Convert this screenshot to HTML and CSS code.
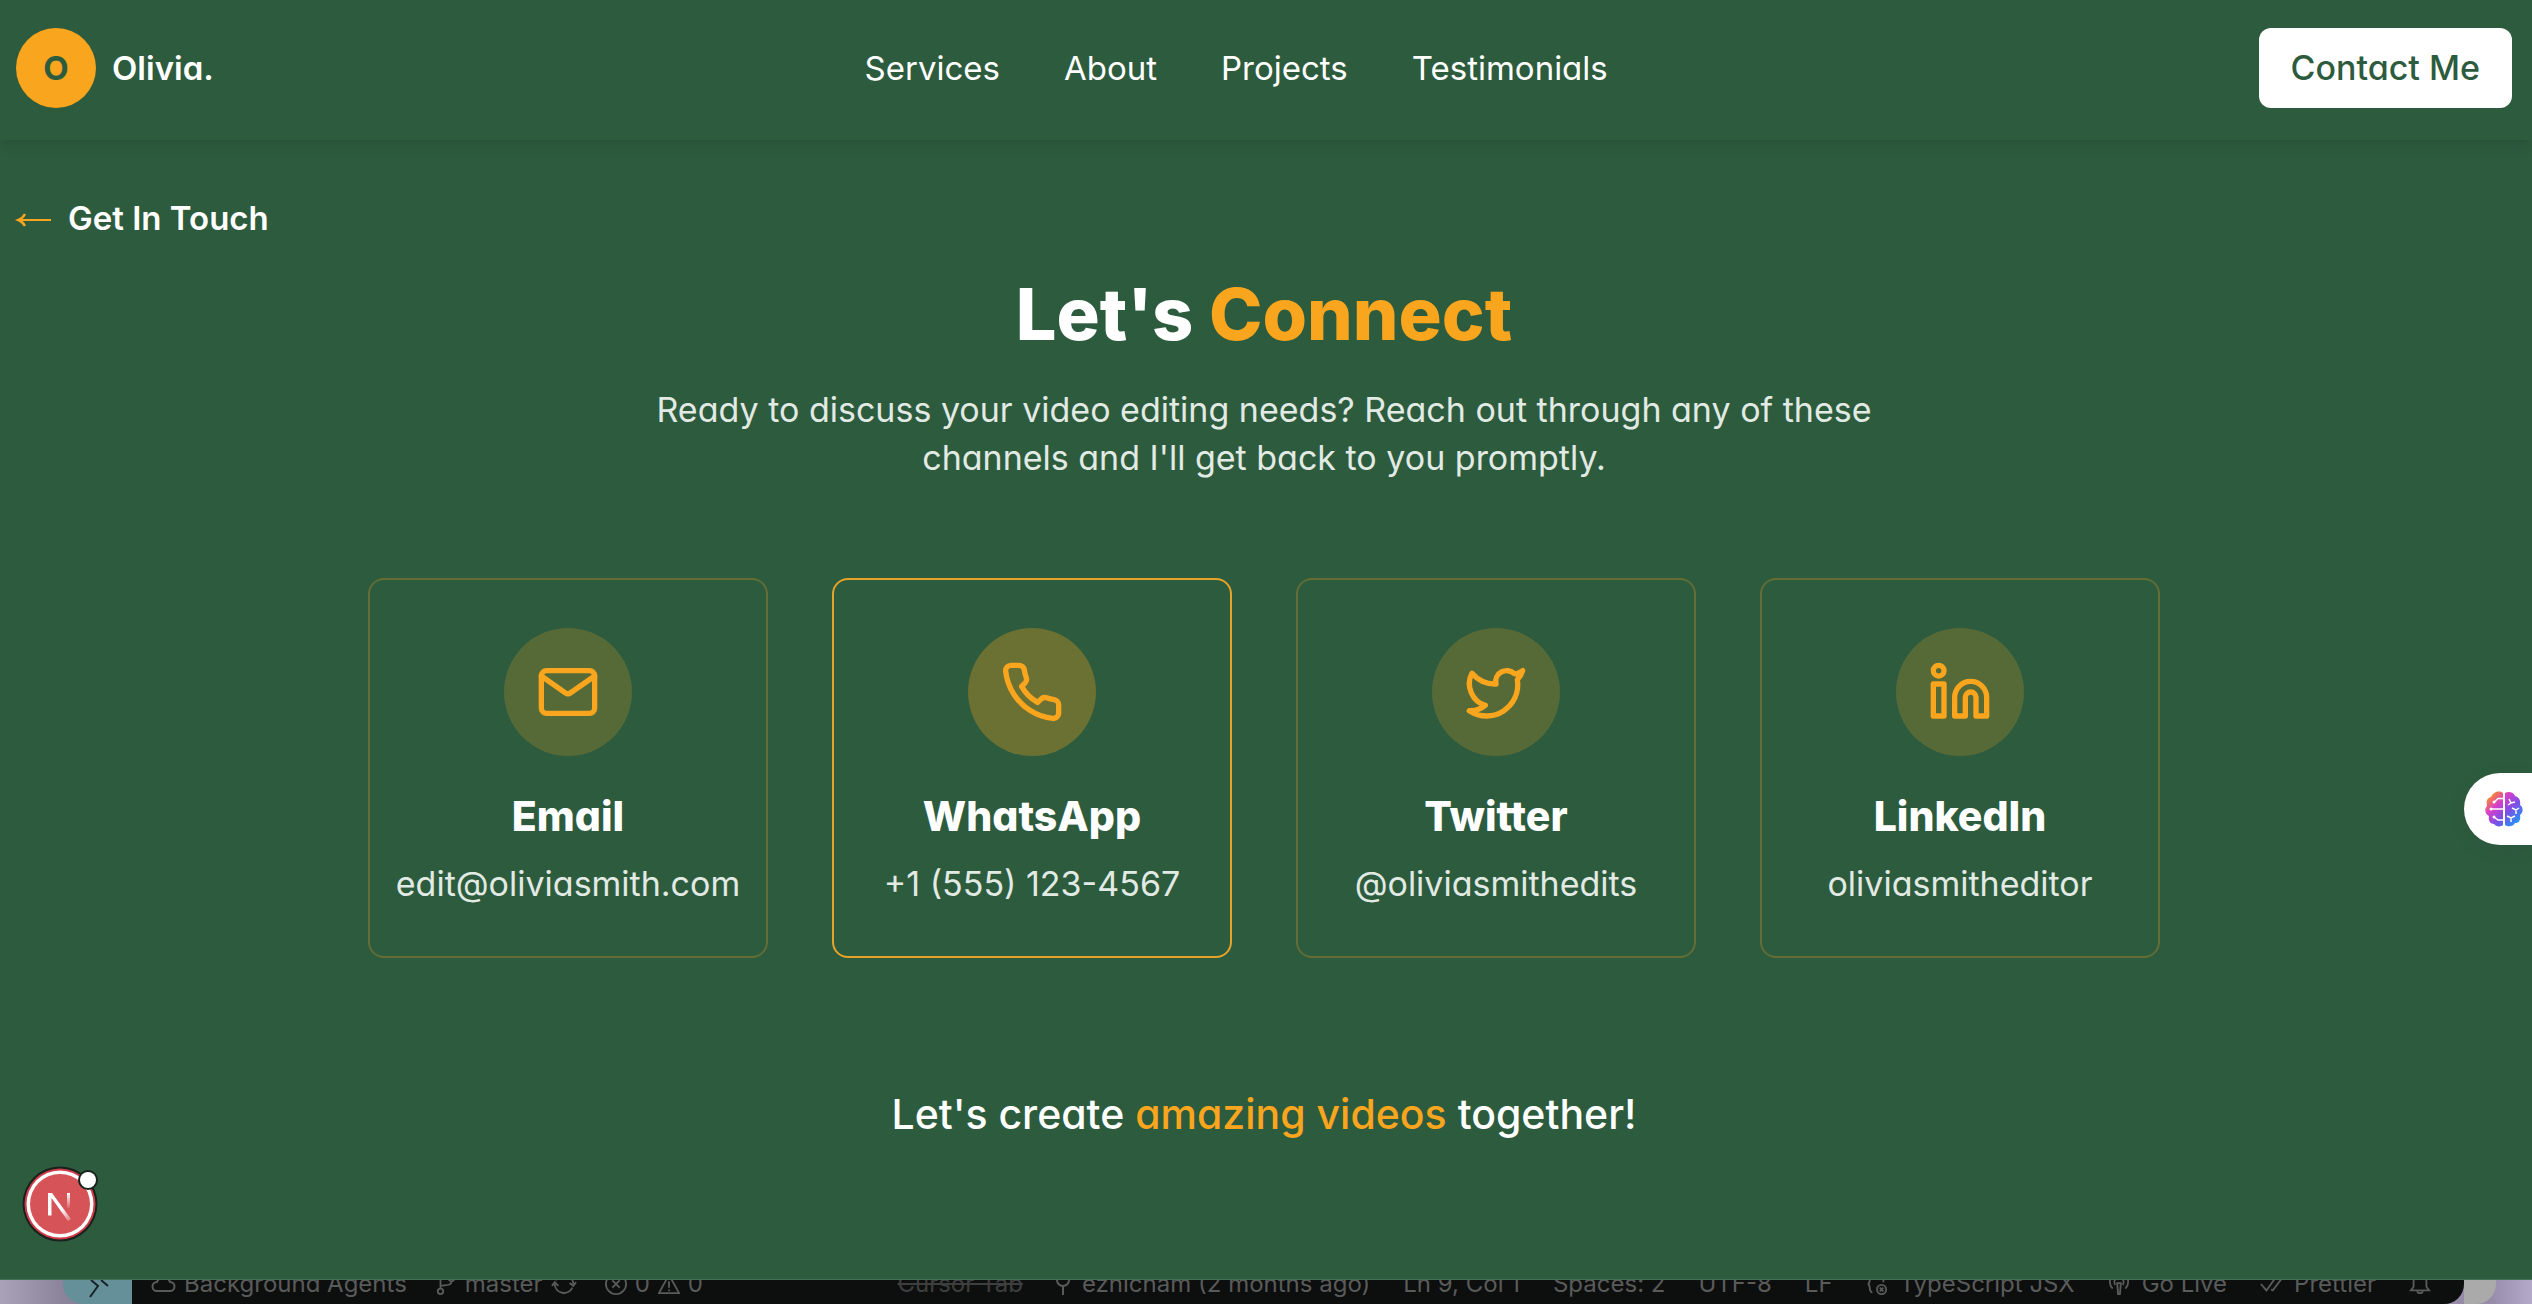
FILE: index.html
```html
<!DOCTYPE html>
<html lang="en">
<head>
  <meta charset="utf-8">
  <meta name="viewport" content="width=device-width, initial-scale=1">
  <title>Olivia. | Get In Touch</title>
  <link rel="stylesheet" href="styles.css">
</head>
<body>
  <div class="page">
    <header class="header">
      <a class="brand" href="#home"><span class="brand-mark">O</span><span class="brand-name">Olivia.</span></a>
      <nav class="nav" aria-label="Main">
        <a href="#services">Services</a>
        <a href="#about">About</a>
        <a href="#projects">Projects</a>
        <a href="#testimonials">Testimonials</a>
      </nav>
      <button class="contact-button" type="button">Contact Me</button>
    </header>

    <main class="main">
      <a class="back" href="#home">
        <svg class="back-arrow" viewBox="0 0 36 16" aria-hidden="true"><path d="M3 10H35" stroke-width="2"/><path d="M9 4Q6.500 8.500 2.500 10Q6.500 11.500 9 16" stroke-width="2.500"/></svg>
        <span>Get In Touch</span>
      </a>
      <h1 class="title">Let's <span class="accent">Connect</span></h1>
      <p class="intro">Ready to discuss your video editing needs? Reach out through any of these channels and I'll get back to you promptly.</p>

      <div class="cards">
        <a class="card" href="mailto:edit@oliviasmith.com">
          <span class="card-icon"><svg viewBox="0 0 24 24" aria-hidden="true"><path d="M4 4h16c1.100 0 2 .9 2 2v12c0 1.100-.9 2-2 2H4c-1.100 0-2-.9-2-2V6c0-1.100.9-2 2-2z"/><path d="M22 6l-9 6.300a1.700 1.700 0 0 1-2 0L2 6"/></svg></span>
          <h2 class="card-title">Email</h2>
          <p class="card-text">edit@oliviasmith.com</p>
        </a>
        <a class="card card-active" href="tel:+15551234567">
          <span class="card-icon"><svg viewBox="0 0 24 24" aria-hidden="true"><path d="M22 16.920v3a2 2 0 0 1-2.180 2 19.790 19.790 0 0 1-8.630-3.070 19.500 19.500 0 0 1-6-6 19.790 19.790 0 0 1-3.070-8.670A2 2 0 0 1 4.110 2h3a2 2 0 0 1 2 1.720 12.840 12.840 0 0 0 .7 2.810 2 2 0 0 1-.45 2.110L8.090 9.910a16 16 0 0 0 6 6l1.270-1.270a2 2 0 0 1 2.110-.45 12.840 12.840 0 0 0 2.810.7A2 2 0 0 1 22 16.920z"/></svg></span>
          <h2 class="card-title">WhatsApp</h2>
          <p class="card-text">+1 (555) 123-4567</p>
        </a>
        <a class="card" href="#twitter">
          <span class="card-icon"><svg viewBox="0 0 24 24" aria-hidden="true"><path d="M22 4s-.7 2.100-2 3.400c1.600 10-9.400 17.300-18 11.600 2.200.1 4.400-.6 6-2C3 15.500.5 9.600 3 5c2.200 2.600 5.600 4.100 9 4-.9-4.200 4-6.600 7-3.800 1.100 0 3-1.200 3-1.200z"/></svg></span>
          <h2 class="card-title">Twitter</h2>
          <p class="card-text">@oliviasmithedits</p>
        </a>
        <a class="card" href="#linkedin">
          <span class="card-icon"><svg viewBox="0 0 24 24" aria-hidden="true"><path d="M16 8a6 6 0 0 1 6 6v7h-4v-7a2 2 0 0 0-4 0v7h-4v-7a6 6 0 0 1 6-6z"/><rect x="2" y="9" width="4" height="12"/><circle cx="4" cy="4" r="2"/></svg></span>
          <h2 class="card-title">LinkedIn</h2>
          <p class="card-text">oliviasmitheditor</p>
        </a>
      </div>

      <p class="closing">Let's create <span class="accent">amazing videos</span> together!</p>
    </main>

    <button class="assistant" type="button" aria-label="Open assistant">
      <svg viewBox="0 0 38 36" aria-hidden="true">
        <defs>
          <linearGradient id="brain" x1="0" y1="0" x2="1" y2="1">
            <stop offset="0" stop-color="#ffae1a"/><stop offset=".15" stop-color="#f5813f"/><stop offset=".35" stop-color="#d63fcb"/><stop offset=".6" stop-color="#7a50e6"/><stop offset=".85" stop-color="#2f8df5"/><stop offset="1" stop-color="#25b5ff"/>
          </linearGradient>
        </defs>
        <path fill="url(#brain)" d="M18 2v32c-2 2-7 2-9-1-4 0-6-4-5-8-4-2-5-7-2-10-1-5 0-8 4-9 2-5 8-7 12-4zM20 2c3-2 9-1 10 3 4 1 6 5 5 9 4 3 3 8 0 10 1 5-1 8-5 8-2 4-7 4-10 2z"/>
        <path class="brain-lines" d="M18 7.500h-5l-3 3M18 18H7M18 29h-5l-4-3M24 8l2 4 4-1M26 12l-3 2M27 17l4 2 3-2M31 19v4M22 25l4 2 4-2M26 27v4"/>
        <circle cx="9" cy="11" r="1.500" fill="#fff"/><circle cx="6" cy="18" r="1.500" fill="#fff"/><circle cx="9" cy="26" r="1.500" fill="#fff"/>
      </svg>
    </button>

    <button class="dev-badge" type="button" aria-label="Open developer tools">
      <svg viewBox="0 0 76 76" aria-hidden="true">
        <defs>
          <linearGradient id="fade" x1="0" y1="0" x2="0" y2="1"><stop offset="0" stop-color="#fff"/><stop offset="1" stop-color="#fff" stop-opacity=".1"/></linearGradient>
          <linearGradient id="tail" x1="0" y1="0" x2="1" y2="1"><stop offset=".6" stop-color="#fff"/><stop offset="1" stop-color="#fff" stop-opacity=".2"/></linearGradient>
        </defs>
        <circle cx="38" cy="38" r="37.500" fill="#17221c"/>
        <circle cx="38" cy="38" r="35.500" fill="#ce3b49"/>
        <circle cx="38" cy="38" r="33.500" fill="#fff"/>
        <circle cx="38" cy="38" r="30" fill="#d65357"/>
        <path d="M26 27h4l19 26-3 2-16.500-23v17.500H26z" fill="url(#tail)"/>
        <rect x="45" y="27" width="3" height="15" fill="url(#fade)"/>
        <circle cx="66" cy="14" r="10" fill="#17221c"/><circle cx="66" cy="14" r="8" fill="#fff"/>
      </svg>
    </button>
  </div>

  <footer class="desktop">
    <div class="remote"><svg viewBox="0 0 22 18" aria-hidden="true"><path d="M2 0l7 6-8 11M12 0l7 6"/></svg></div>
    <div class="status">
      <div class="status-left">
        <span class="item"><svg class="wide" viewBox="0 0 24 24" aria-hidden="true"><path d="M6 19h13a4 4 0 0 0 0-9 7 7 0 0 0-13 0 4.500 4.500 0 0 0 0 9z"/></svg>Background Agents</span>
        <span class="item"><svg viewBox="0 0 24 24" aria-hidden="true"><circle cx="6" cy="20" r="3"/><circle cx="18" cy="6" r="3"/><path d="M6 17V4M18 9c0 5-6 4-12 5"/></svg>master <svg class="wide" viewBox="0 0 28 24" aria-hidden="true"><path d="M4 12a10 10 0 0 0 19 4M24 12A10 10 0 0 0 5 8M1 14l3-4 4 4M20 11l4 3 3-4"/></svg></span>
        <span class="item"><svg viewBox="0 0 24 24" aria-hidden="true"><circle cx="12" cy="12" r="11"/><path d="M8 8l8 8M16 8l-8 8"/></svg>0 <svg viewBox="0 0 24 24" aria-hidden="true"><path d="M12 2L1 22h22zM12 9v7M12 18v2"/></svg>0</span>
      </div>
      <div class="status-right">
        <span class="item muted">Cursor Tab</span>
        <span class="item"><svg class="pin" viewBox="0 0 14 24" aria-hidden="true"><circle cx="7" cy="8" r="6"/><path d="M7 14v9"/></svg>eznicham (2 months ago)</span>
        <span class="item">Ln 9, Col 1</span>
        <span class="item">Spaces: 2</span>
        <span class="item">UTF-8</span>
        <span class="item">LF</span>
        <span class="item"><svg viewBox="0 0 24 24" aria-hidden="true"><path d="M8 2C2 2 6 11 2 12c4 1 0 9 5 9M17 2c3 0 2 4 2 8"/><circle cx="17" cy="18" r="5"/><path d="M15 16l4 4M19 16l-4 4"/></svg>TypeScript JSX</span>
        <span class="item"><svg viewBox="0 0 24 24" aria-hidden="true"><path d="M5 17A10 10 0 1 1 19 17M8 13a5 5 0 1 1 8 0M10 11h4l-1 12h-2z"/></svg>Go Live</span>
        <span class="item"><svg viewBox="0 0 24 24" aria-hidden="true"><path d="M1 12l6 7L17 5M12 18l2 1L23 7"/></svg>Prettier</span>
        <span class="item"><svg viewBox="0 0 24 24" aria-hidden="true"><path d="M2 19h20l-3-4V9A7 7 0 0 0 5 9v6zM9 19a3 3 0 0 0 6 0"/></svg></span>
      </div>
    </div>
    <div class="window-edge"></div>
  </footer>
</body>
</html>
```

FILE: styles.css
```css
:root {
  --green: #2d5b3e;
  --orange: #f9a51e;
  --white: #fff;
}

* {
  box-sizing: border-box;
}

body {
  margin: 0;
  min-height: 100vh;
  display: flex;
  flex-direction: column;
  background: #a79fb6;
  color: var(--white);
  font-family: Inter, "Open Sans", sans-serif;
  font-feature-settings: "cv11";
  font-size: 33px;
  line-height: 48px;
}

h1, h2, p {
  margin: 0;
}

a {
  color: inherit;
  text-decoration: none;
}

button {
  border: 0;
  font: inherit;
  font-feature-settings: inherit;
  cursor: pointer;
}

.page {
  position: relative;
  flex: 1;
  padding-right: 4px;
  background: var(--green);
  border-bottom: 1px solid #47705a;
}

.accent {
  color: var(--orange);
}

/* Header */
.header {
  display: flex;
  align-items: center;
  justify-content: space-between;
  margin-right: -4px;
  padding: 28px 20px 32px 16px;
  box-shadow: 0 4px 12px rgba(0, 0, 0, .12);
}

.brand {
  display: flex;
  align-items: center;
  gap: 16px;
  font-weight: 600;
}

.brand-mark {
  display: grid;
  place-items: center;
  width: 80px;
  height: 80px;
  border-radius: 50%;
  background: var(--orange);
  color: var(--green);
  font-weight: 700;
}

.nav {
  display: flex;
  gap: 64px;
}

.contact-button {
  height: 80px;
  padding: 0 32px;
  border-radius: 12px;
  background: var(--white);
  color: var(--green);
  font-size: 34px;
  font-weight: 500;
}

/* Contact section */
.main {
  display: flex;
  flex-direction: column;
  align-items: center;
  padding: 54px 16px 128px;
}

.back {
  display: flex;
  align-items: center;
  align-self: flex-start;
  gap: 16px;
  font-weight: 600;
}

.back-arrow {
  width: 36px;
  height: 16px;
  fill: none;
  stroke: var(--orange);
  overflow: visible;
}

.title {
  margin-top: 32px;
  font-size: 72px;
  font-weight: 800;
  line-height: 80px;
}

.intro {
  max-width: 1280px;
  margin-top: 32px;
  color: #e2eae4;
  font-size: 34px;
  text-align: center;
}

.cards {
  display: grid;
  grid-template-columns: repeat(4, 1fr);
  gap: 64px;
  width: 100%;
  max-width: 1792px;
  margin-top: 96px;
}

.card {
  display: flex;
  flex-direction: column;
  align-items: center;
  padding: 48px 16px;
  border: 2px solid #646d36;
  border-radius: 16px;
}

.card-active {
  border-color: #e6a32a;
}

.card-icon {
  display: grid;
  place-items: center;
  width: 128px;
  height: 128px;
  border-radius: 50%;
  background: #566a37;
}

.card-active .card-icon {
  background: #6b7133;
}

.card-icon svg {
  width: 64px;
  height: 64px;
  fill: none;
  stroke: var(--orange);
  stroke-width: 2;
  stroke-linecap: round;
  stroke-linejoin: round;
}

.card-title {
  margin-top: 32px;
  font-size: 41px;
  font-weight: 800;
  line-height: 56px;
}

.card-text {
  margin-top: 16px;
  color: #e2eae4;
  font-size: 34px;
}

.closing {
  margin-top: 128px;
  font-size: 41px;
  font-weight: 500;
  line-height: 56px;
}

/* Floating controls */
.assistant {
  position: absolute;
  right: 0;
  top: 773px;
  width: 68px;
  height: 72px;
  padding: 0 9px 0 21px;
  display: flex;
  align-items: center;
  border-radius: 36px 0 0 36px;
  background: var(--white);
  box-shadow: 0 4px 24px rgba(0, 0, 0, .04);
}

.assistant svg {
  width: 38px;
  height: 36px;
}

.brain-lines {
  fill: none;
  stroke: #fff;
  stroke-width: 1.5;
}

.dev-badge {
  position: absolute;
  left: 22px;
  bottom: 37px;
  width: 76px;
  height: 76px;
  padding: 0;
  border-radius: 50%;
  background: none;
}

.dev-badge svg {
  display: block;
  overflow: visible;
}

/* Editor window behind the page */
.desktop {
  display: flex;
  height: 24px;
  padding-left: 63px;
  overflow: hidden;
  background: linear-gradient(90deg, #aaa2b8, #8b8399 63px, #968caa 2490px, #b5a9c9);
  color: #595b5a;
  font-feature-settings: normal;
  font-size: 24px;
  line-height: 30px;
}

.remote {
  width: 69px;
  padding-left: 26px;
  border-bottom-left-radius: 20px;
  background: #65909a;
}

.remote svg {
  display: block;
  width: 22px;
  height: 18px;
}

.desktop svg {
  fill: none;
  stroke: currentColor;
  stroke-width: 2;
}

.remote svg {
  color: #172326;
}

.status {
  position: relative;
  flex: 1;
  display: flex;
  align-items: flex-end;
  justify-content: space-between;
  padding: 0 33px 5px 18px;
  border-bottom-right-radius: 20px;
  background: #0d0e0e;
  white-space: nowrap;
}

.status-left {
  display: flex;
  gap: 28px;
}

.status-right {
  display: flex;
  gap: 33px;
}

.item {
  display: flex;
  align-items: center;
  gap: 12px;
}

.status-left .item {
  gap: 8px;
}

.item svg {
  width: 22px;
  height: 24px;
}

.item .wide {
  width: 26px;
}

.item .pin {
  width: 14px;
}

.muted {
  color: #3d3f3e;
  text-decoration: line-through;
}

.window-edge {
  width: 32px;
  margin-right: 36px;
  border-bottom-right-radius: 20px;
  background: #a9aaa9;
}
```
